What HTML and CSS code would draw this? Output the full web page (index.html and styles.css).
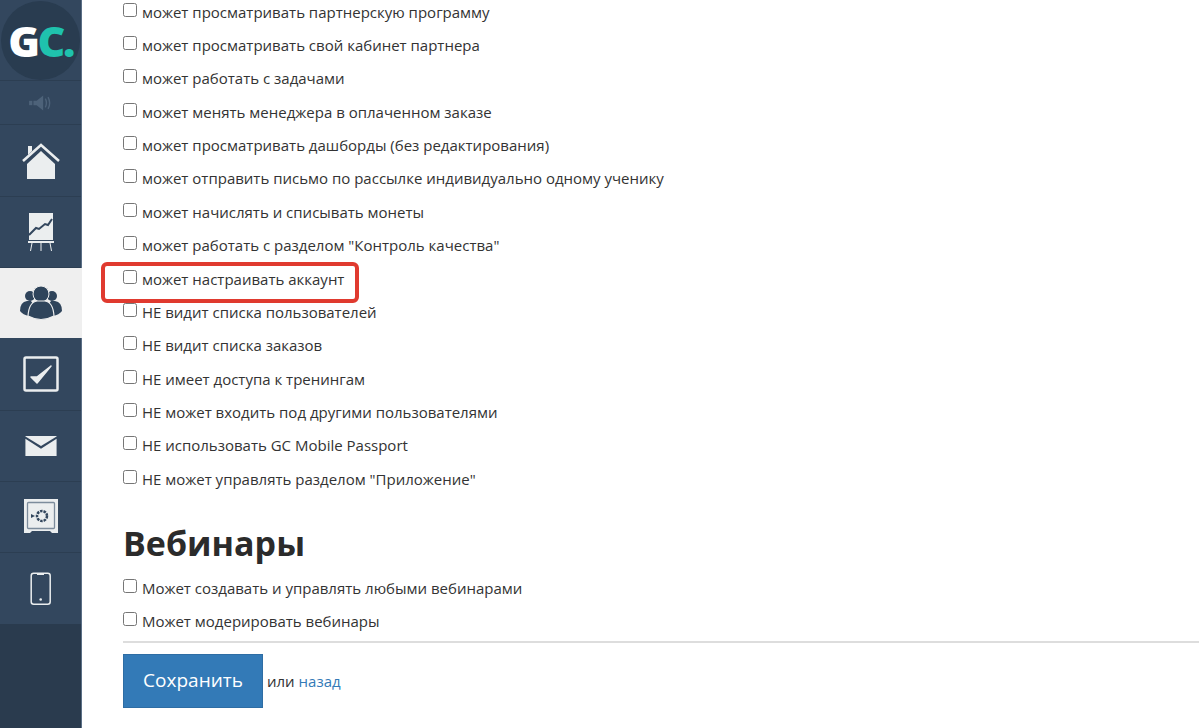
FILE: index.html
```html
<!DOCTYPE html>
<html lang="ru">
<head>
<meta charset="utf-8">
<title>Настройки</title>
<link rel="stylesheet" href="styles.css">
</head>
<body>
<div class="page">
<nav class="sidebar">
  <div class="logo-row">
    <div class="logo"><span class="g">G</span><span class="c">C.</span></div>
  </div>
  <div class="speaker-row">
    <svg width="26" height="22" viewBox="0 0 24 20"><rect x="1" y="8" width="3" height="4" fill="#4d6279"/><path d="M5 8h3l6-5v14l-6-5H5z" fill="#4d6279"/><path d="M16 6q2 4 0 8M18.5 4.5q3 5.500 0 11" fill="none" stroke="#4d6279" stroke-width="1.300"/></svg>
  </div>
  <a class="item item-home"><svg width="38" height="36" viewBox="0 0 38 36"><path d="M1 18L19 2l18 16" fill="none" stroke="#ebeeef" stroke-width="2.500"/><path d="M6 3h4v5l-4 4z" fill="#ebeeef"/><path d="M5 21L19 8l14 13v15H5z" fill="#ebeeef"/></svg></a>
  <a class="item item-chart"><svg width="26" height="38" viewBox="0 0 26 38"><rect x="1" y="0" width="24" height="27" fill="#ebeeef"/><path d="M1 22l7-7 3 1 6-5 3 1 4-6" fill="none" stroke="#33475e" stroke-width="2"/><rect x="0" y="28" width="26" height="2" fill="#ebeeef"/><path d="M4 30l-1.500 8M13 30v8M22 30l1.500 8" stroke="#ebeeef" stroke-width="1"/></svg></a>
  <a class="item item-active"><svg width="42" height="36" viewBox="0 0 42 36"><g fill="#2f445b"><circle cx="10" cy="11" r="5"/><circle cx="32" cy="11" r="5"/><path d="M0 26q0-9 7-10h4l2 3-4 12q-6-1-9-5zM42 26q0-9-7-10h-4l-2 3 4 12q6-1 9-5z"/><circle cx="21" cy="9" r="8" stroke="#efefef" stroke-width="1"/><path d="M8 31q1-14 9-15h8q8 1 9 15-13 7-26 0z" stroke="#efefef" stroke-width="1.200"/></g></svg></a>
  <a class="item item-tasks"><svg width="36" height="36" viewBox="0 0 36 36"><rect x="1.500" y="1.500" width="33" height="33" rx="1.500" fill="none" stroke="#ebeeef" stroke-width="2.500"/><path d="M8 21l6 6 14-17-14 11z" fill="#ebeeef" stroke="#ebeeef" stroke-width="1.500" stroke-linejoin="round"/></svg></a>
  <a class="item item-mail"><svg width="36" height="22" viewBox="0 0 36 24"><path d="M1 1h34v.500L18 12 1 1.500z" fill="#ebeeef"/><path d="M1 4l17 11L35 4v19H1z" fill="#ebeeef"/></svg></a>
  <a class="item item-safe"><svg width="36" height="36" viewBox="0 0 36 36"><path d="M1 0h34v34h-6l-2-2H9l-2 2H1z" fill="#ebeeef"/><rect x="4.500" y="3.500" width="27" height="26" rx="1" fill="none" stroke="#7c8c9c" stroke-width="1.300"/><circle cx="19" cy="17" r="5" fill="none" stroke="#33475e" stroke-width="2.500" stroke-dasharray="2.500 1"/><path d="M8 15l4 2-4 2z" fill="#33475e"/></svg></a>
  <a class="item item-phone"><svg width="22" height="34" viewBox="0 0 22 34"><rect x="1.200" y="1.200" width="19" height="31" rx="2.500" fill="none" stroke="#ebeeef" stroke-width="1.500"/><path d="M7 1.500h7v1.500H7z" fill="#ebeeef"/><circle cx="10.700" cy="27.500" r="1.300" fill="#ebeeef"/></svg></a>
  <div class="sidebar-rest"></div>
</nav>
<main class="content">
  <ul class="checks">
    <li><label><input type="checkbox"> может просматривать партнерскую программу</label></li>
    <li><label><input type="checkbox"> может просматривать свой кабинет партнера</label></li>
    <li><label><input type="checkbox"> может работать с задачами</label></li>
    <li><label><input type="checkbox"> может менять менеджера в оплаченном заказе</label></li>
    <li><label><input type="checkbox"> может просматривать дашборды (без редактирования)</label></li>
    <li><label><input type="checkbox"> может отправить письмо по рассылке индивидуально одному ученику</label></li>
    <li><label><input type="checkbox"> может начислять и списывать монеты</label></li>
    <li><label><input type="checkbox"> может работать с разделом "Контроль качества"</label></li>
    <li class="marked"><label><input type="checkbox"> может настраивать аккаунт</label></li>
    <li><label><input type="checkbox"> НЕ видит списка пользователей</label></li>
    <li><label><input type="checkbox"> НЕ видит списка заказов</label></li>
    <li><label><input type="checkbox"> НЕ имеет доступа к тренингам</label></li>
    <li><label><input type="checkbox"> НЕ может входить под другими пользователями</label></li>
    <li><label><input type="checkbox"> НЕ использовать GC Mobile Passport</label></li>
    <li><label><input type="checkbox"> НЕ может управлять разделом "Приложение"</label></li>
  </ul>
  <h2 class="section-title">Вебинары</h2>
  <ul class="checks">
    <li><label><input type="checkbox"> Может создавать и управлять любыми вебинарами</label></li>
    <li><label><input type="checkbox"> Может модерировать вебинары</label></li>
  </ul>
  <div class="actions">
    <button class="save" type="button">Сохранить</button>
    <span class="or">или <a class="back">назад</a></span>
  </div>
</main>
</div>
</body>
</html>
```
FILE: styles.css
```css
* { box-sizing: border-box; }
html, body { margin: 0; height: 100%; overflow: hidden; background: #fff; }
body { font-family: "Open Sans", "Liberation Sans", sans-serif; color: #333; }
.page { display: flex; height: 728px; overflow: hidden; }

.sidebar { width: 82px; flex: none; display: flex; flex-direction: column; background: #33475e; border-right: 1px solid #5b6f86; }
.logo-row { height: 81px; display: flex; align-items: center; justify-content: center; flex: none; border-bottom: 1px solid #2c3e52; }
.logo { width: 79px; height: 79px; border-radius: 50%; background: #293c50; display: flex; align-items: center; justify-content: center; font-family: "Open Sans", sans-serif; font-weight: 800; font-size: 43px; letter-spacing: -2.5px; line-height: 1; }
.g { color: #fff; }
.c { color: #1fc2ad; }
.speaker-row { height: 44px; flex: none; display: flex; align-items: center; justify-content: center; border-bottom: 1px solid #2c3e52; }
.item { flex: none; display: flex; align-items: center; justify-content: center; height: 71px; border-bottom: 1px solid #2c3e52; }
.item-home { height: 72px; }
.item-active { background: #efefef; border-bottom: 0; height: 70px; margin-right: -1px; }
.item-tasks { height: 73px; }
.item-phone { border-bottom: 0; }
.sidebar-rest { flex: 1; background: #2a3b4e; }

.content { flex: 1; padding-left: 41px; margin-top: -5px; min-width: 0; }
.checks { list-style: none; margin: 0; padding: 0; }
.checks li { height: 33.37px; display: flex; align-items: center; }
.checks label { font-size: 15px; line-height: 20px; color: #333; white-space: nowrap; }
.checks input { appearance: none; width: 14px; height: 14px; margin: 0 1px 0 0; border: 1.5px solid #767676; border-radius: 2.5px; background: #fff; vertical-align: 1px; }
.marked { position: relative; }
.marked::after { content: ""; position: absolute; left: -22px; top: 0; width: 250px; height: 33px; border: 4px solid #e03a2f; border-radius: 6px; pointer-events: none; }

.section-title { margin: 28px 0 8px; font-size: 34px; line-height: 40px; font-weight: 700; color: #2b2b2b; }
.actions { margin-top: 3px; border-top: 2px solid #ddd; padding-top: 11px; display: flex; align-items: center; }
.save { width: 140px; height: 54px; background: #337ab7; border: 1px solid #2e6da4; color: #fff; font: 19px/1 "Open Sans", sans-serif; padding: 0 0 2px; }
.or { margin-left: 4px; font-size: 15px; color: #333; }
.back { color: #337ab7; }
```
